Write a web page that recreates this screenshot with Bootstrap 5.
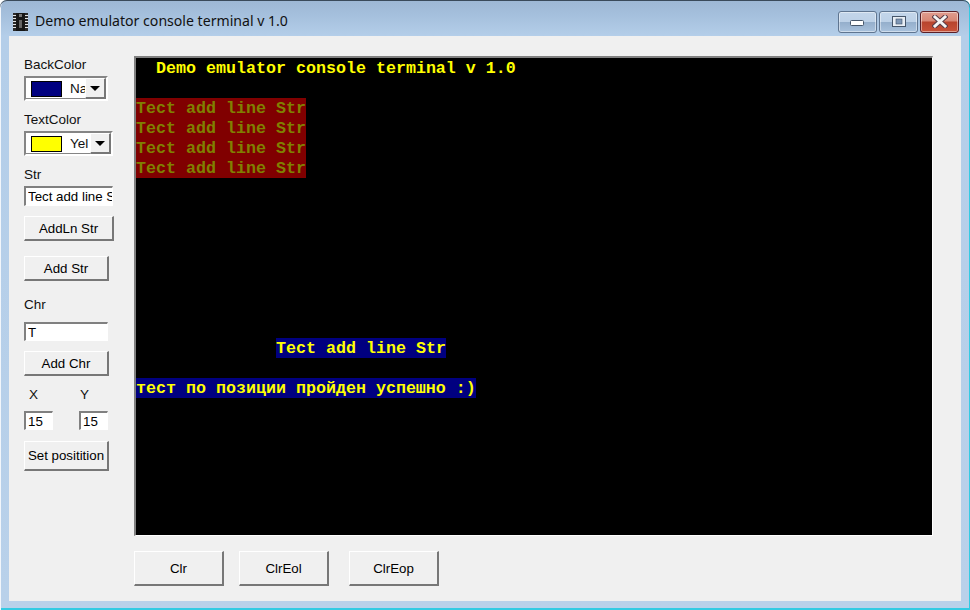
<!DOCTYPE html>
<html lang="en">
<head>
<meta charset="utf-8">
<title>Demo emulator console terminal v 1.0</title>
<link href="https://cdn.jsdelivr.net/npm/bootstrap@5.3.0/dist/css/bootstrap.min.css" rel="stylesheet">
<style>
html,body{margin:0;height:610px;overflow:hidden;background:#fff}
.win-frame{width:970px;height:610px;padding:0 9px 9px;border-radius:7px 7px 0 0;
 background:linear-gradient(180deg,#9db7d4 0,#a4bfdc 14px,#b4cee9 36px,#b9d1ea 100%);
 box-shadow:inset 0 1px 0 #3a4a5a,inset 1px 0 0 #f2f6fb,inset -1px 0 0 #33cbe3,inset 0 -2px 0 #33cbe3}
.win-title{height:36px;padding:7px 0 0 4px;font:14.1px/1 "Noto Sans",sans-serif;color:#111}
.chip{width:15px;height:18px;margin-right:7px;flex:none}
.cap-btn{height:22px;width:39px;border:1px solid #5f7590;border-radius:3px;
 background:linear-gradient(180deg,#c3d6ea 0,#bdd1e7 48%,#94aecb 50%,#a9c2dd 100%);box-shadow:inset 0 0 0 1px rgba(255,255,255,.45)}
.cap-group{margin-right:2px;gap:2px}
.cap-close{border-color:#5b1f27;background:linear-gradient(180deg,#e09d90 0,#d88674 45%,#b8442d 50%,#c9533a 100%)}
.cap-glyph{display:block}
.win-client{height:565px;background:#f0f0f0;padding:0 0 0 15px;font:13.5px/1 "Liberation Sans",sans-serif;color:#111}
.side-col{width:110px;flex:none;padding-top:22px}
.lbl{height:14px;line-height:14px}
.combo{height:25px;margin-top:4px;background:#fff;border:2px solid;border-color:#858585 #fff #fff #858585;padding:3px 1px 3px 5px;overflow:hidden;box-shadow:inset -1px -1px 0 #858585}
.w84{width:84px}.w89{width:89px}.w85{width:85px}.w90{width:90px}.w29{width:29px}
.swatch{width:31px;height:16px;border:1px solid #000;flex:none}
.sw-navy{background:#000080}.sw-yellow{background:#ff0}
.combo-txt{margin-left:8px;font-size:13.5px;line-height:16px;white-space:nowrap;overflow:hidden;flex:1 1 0;min-width:0}
.drop{width:21px;height:21px;flex:none;margin:-2px -1px -2px 0;background:#f0f0f0;border:1px solid;border-color:#fff #777 #777 #fff;border-width:1px 2px 2px 1px}
.tri{width:0;height:0;border-left:5px solid transparent;border-right:5px solid transparent;border-top:5px solid #000}
.fld.form-control{display:block;border-radius:0;padding:0 0 0 2px;font:13.3px/1 "Liberation Sans",sans-serif;color:#000;background:#fff;border-width:2px 1px 1px 2px;border-style:solid;border-color:#808080 #fff #fff #808080;box-shadow:none;min-height:0}
.fh20{height:20px}.fh19{height:19px}
.wbtn.btn{display:block;padding:0;border-radius:0;background:#f0f0f0;color:#000;font:13.3px/1 "Liberation Sans",sans-serif;border-style:solid;border-width:1px 2px 2px 1px;border-color:#fff #777 #777 #fff}
.wbtn.btn.bh25,.wbtn.btn.bh35{padding-top:2px}
.bh25{height:25px}.bh30{height:30px}.bh35{height:35px}
.mt4{margin-top:4px}.mt9{margin-top:9px}.mt10{margin-top:10px}.mt11{margin-top:11px}.mt12{margin-top:12px}.mt15{margin-top:15px}.mt17{margin-top:17px}
.lbl-xy{width:56px;padding-left:5px}
.g26{margin-left:26px}
.term-col{padding-top:20px}
.term-box{width:799px;height:480px;background:#000;border-style:solid;border-color:#808080 #fff #fff #808080;border-width:2px 1px 1px 2px;font:bold 16.67px/22px "Liberation Mono",monospace;color:#ff0}
.trow{height:20px;white-space:pre}
.on-red{background:#800000;color:#808000}
.on-navy{background:#000080}
.run{display:block;width:fit-content;height:20px}
.indent2{margin-left:20px}.indent14{margin-left:140px}
.btn-row{margin-top:15px}
.g15{margin-left:15px}.g20{margin-left:20px}
</style>
</head>
<body>
<div class="win-frame">
  <div class="win-title d-flex align-items-center">
    <svg class="chip" viewBox="0 0 15 18" aria-hidden="true">
      <rect x="0" y="0" width="15" height="18" fill="#2a2a2a"/>
      <rect x="3" y="0" width="9" height="18" fill="#161616"/>
      <rect x="0" y="2" width="3" height="1" fill="#e4e4e4"/><rect x="12" y="2" width="3" height="1" fill="#e4e4e4"/>
      <rect x="0" y="5" width="3" height="1" fill="#e4e4e4"/><rect x="12" y="5" width="3" height="1" fill="#e4e4e4"/>
      <rect x="0" y="8" width="3" height="1" fill="#e4e4e4"/><rect x="12" y="8" width="3" height="1" fill="#e4e4e4"/>
      <rect x="0" y="11" width="3" height="1" fill="#e4e4e4"/><rect x="12" y="11" width="3" height="1" fill="#e4e4e4"/>
      <rect x="0" y="14" width="3" height="1" fill="#e4e4e4"/><rect x="12" y="14" width="3" height="1" fill="#e4e4e4"/>
      <rect x="6" y="7" width="3" height="8" fill="#666"/>
      <rect x="6" y="1" width="3" height="3" fill="#777"/>
    </svg>
    <span>Demo emulator console terminal v 1.0</span>
    <div class="ms-auto d-flex cap-group">
      <div class="cap-btn d-flex align-items-center justify-content-center">
        <svg class="cap-glyph" width="15" height="8" viewBox="0 0 15 8" aria-hidden="true"><rect x=".5" y="2.5" width="13" height="5" rx="1" fill="#fff" stroke="#46566a"/></svg>
      </div>
      <div class="cap-btn d-flex align-items-center justify-content-center">
        <svg class="cap-glyph" width="14" height="11" viewBox="0 0 14 11" aria-hidden="true"><rect x=".5" y=".5" width="13" height="10" fill="#e8eef5" stroke="#46566a"/><rect x="4" y="3" width="6" height="5" fill="#7f97b5" stroke="#3f5068" stroke-width=".6"/></svg>
      </div>
      <div class="cap-btn cap-close d-flex align-items-center justify-content-center">
        <svg class="cap-glyph" width="16" height="13" viewBox="0 0 16 13" aria-hidden="true"><path d="M3 2 L13 11 M13 2 L3 11" stroke="#5a3c46" stroke-width="5" stroke-linecap="square" fill="none"/><path d="M3 2 L13 11 M13 2 L3 11" stroke="#f4f4f4" stroke-width="3" stroke-linecap="square" fill="none"/></svg>
      </div>
    </div>
  </div>
  <div class="win-client d-flex">
    <div class="side-col">
      <div class="lbl">BackColor</div>
      <div class="combo w84 d-flex align-items-center"><span class="swatch sw-navy"></span><span class="combo-txt">Na</span><span class="drop d-flex align-items-center justify-content-center"><span class="tri"></span></span></div>
      <div class="lbl mt12">TextColor</div>
      <div class="combo w89 d-flex align-items-center"><span class="swatch sw-yellow"></span><span class="combo-txt">Yel</span><span class="drop d-flex align-items-center justify-content-center"><span class="tri"></span></span></div>
      <div class="lbl mt12">Str</div>
      <input class="form-control fld w89 fh20 mt4" value="Tect add line Str" aria-label="Str">
      <button class="btn wbtn w90 bh25 mt10">AddLn Str</button>
      <button class="btn wbtn w85 bh25 mt15">Add Str</button>
      <div class="lbl mt17">Chr</div>
      <input class="form-control fld w84 fh19 mt10" value="T" aria-label="Chr">
      <button class="btn wbtn w85 bh25 mt10">Add Chr</button>
      <div class="d-flex mt12"><span class="lbl lbl-xy">X</span><span class="lbl">Y</span></div>
      <div class="d-flex mt9">
        <input class="form-control fld w29 fh19" value="15" aria-label="X">
        <input class="form-control fld w29 fh19 g26" value="15" aria-label="Y">
      </div>
      <button class="btn wbtn w85 bh30 mt11">Set positition</button>
    </div>
    <div class="term-col">
      <div class="term-box">
        <div class="trow"><span class="run indent2">Demo emulator console terminal v 1.0</span></div>
        <div class="trow"></div>
        <div class="trow"><span class="run on-red">Tect add line Str</span></div>
        <div class="trow"><span class="run on-red">Tect add line Str</span></div>
        <div class="trow"><span class="run on-red">Tect add line Str</span></div>
        <div class="trow"><span class="run on-red">Tect add line Str</span></div>
        <div class="trow"></div><div class="trow"></div><div class="trow"></div><div class="trow"></div>
        <div class="trow"></div><div class="trow"></div><div class="trow"></div><div class="trow"></div>
        <div class="trow"><span class="run on-navy indent14">Tect add line Str</span></div>
        <div class="trow"></div>
        <div class="trow"><span class="run on-navy">тест по позиции пройден успешно :)</span></div>
      </div>
      <div class="d-flex btn-row">
        <button class="btn wbtn w90 bh35">Clr</button>
        <button class="btn wbtn w90 bh35 g15">ClrEol</button>
        <button class="btn wbtn w90 bh35 g20">ClrEop</button>
      </div>
    </div>
  </div>
</div>
</body>
</html>
